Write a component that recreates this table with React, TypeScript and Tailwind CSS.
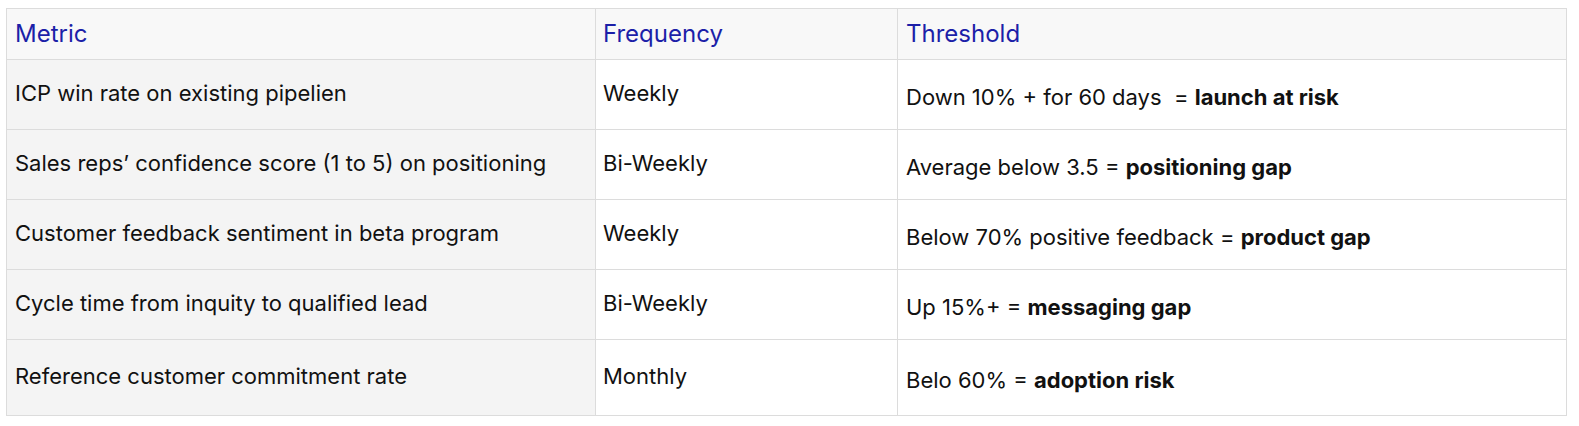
const rows = [
  {
    metric: "ICP win rate on existing pipelien",
    freq: "Weekly",
    pre: "Down 10% + for 60 days  = ",
    bold: "launch at risk",
  },
  {
    metric: "Sales reps’ confidence score (1 to 5) on positioning",
    freq: "Bi-Weekly",
    pre: "Average below 3.5 = ",
    bold: "positioning gap",
  },
  {
    metric: "Customer feedback sentiment in beta program",
    freq: "Weekly",
    pre: "Below 70% positive feedback = ",
    bold: "product gap",
  },
  {
    metric: "Cycle time from inquity to qualified lead",
    freq: "Bi-Weekly",
    pre: "Up 15%+ = ",
    bold: "messaging gap",
  },
  {
    metric: "Reference customer commitment rate",
    freq: "Monthly",
    pre: "Belo 60% = ",
    bold: "adoption risk",
  },
];

export default function App() {
  return (
    <main className="bg-white w-[1579px] h-[426px] pl-[6px] pt-[8px] font-['Inter',sans-serif] text-[22px] text-[#111]">
      <table className="border-collapse table-fixed w-[1560px]">
        <colgroup>
          <col className="w-[589px]" />
          <col className="w-[302px]" />
          <col className="w-[669px]" />
        </colgroup>
        <thead>
          <tr className="h-[51px] bg-[#f8f8f8] text-[#1c1fa8] text-left text-[24px]">
            <th className="border border-[#dcdcdc] px-[8px] font-normal">Metric</th>
            <th className="border border-[#dcdcdc] px-[7px] font-normal">Frequency</th>
            <th className="border border-[#dcdcdc] px-[8px] font-normal">Threshold</th>
          </tr>
        </thead>
        <tbody>
          {rows.map((r, i) => (
            <tr key={i} className={i === rows.length - 1 ? "h-[76px]" : "h-[70px]"}>
              <td className="border border-[#dcdcdc] bg-[#f4f4f4] px-[8px] pb-[3px]">{r.metric}</td>
              <td className="border border-[#dcdcdc] px-[7px] pb-[3px]">{r.freq}</td>
              <td className="border border-[#dcdcdc] px-[8px] pt-[5px] whitespace-pre">
                {r.pre}
                <b className="font-bold">{r.bold}</b>
              </td>
            </tr>
          ))}
        </tbody>
      </table>
    </main>
  );
}
